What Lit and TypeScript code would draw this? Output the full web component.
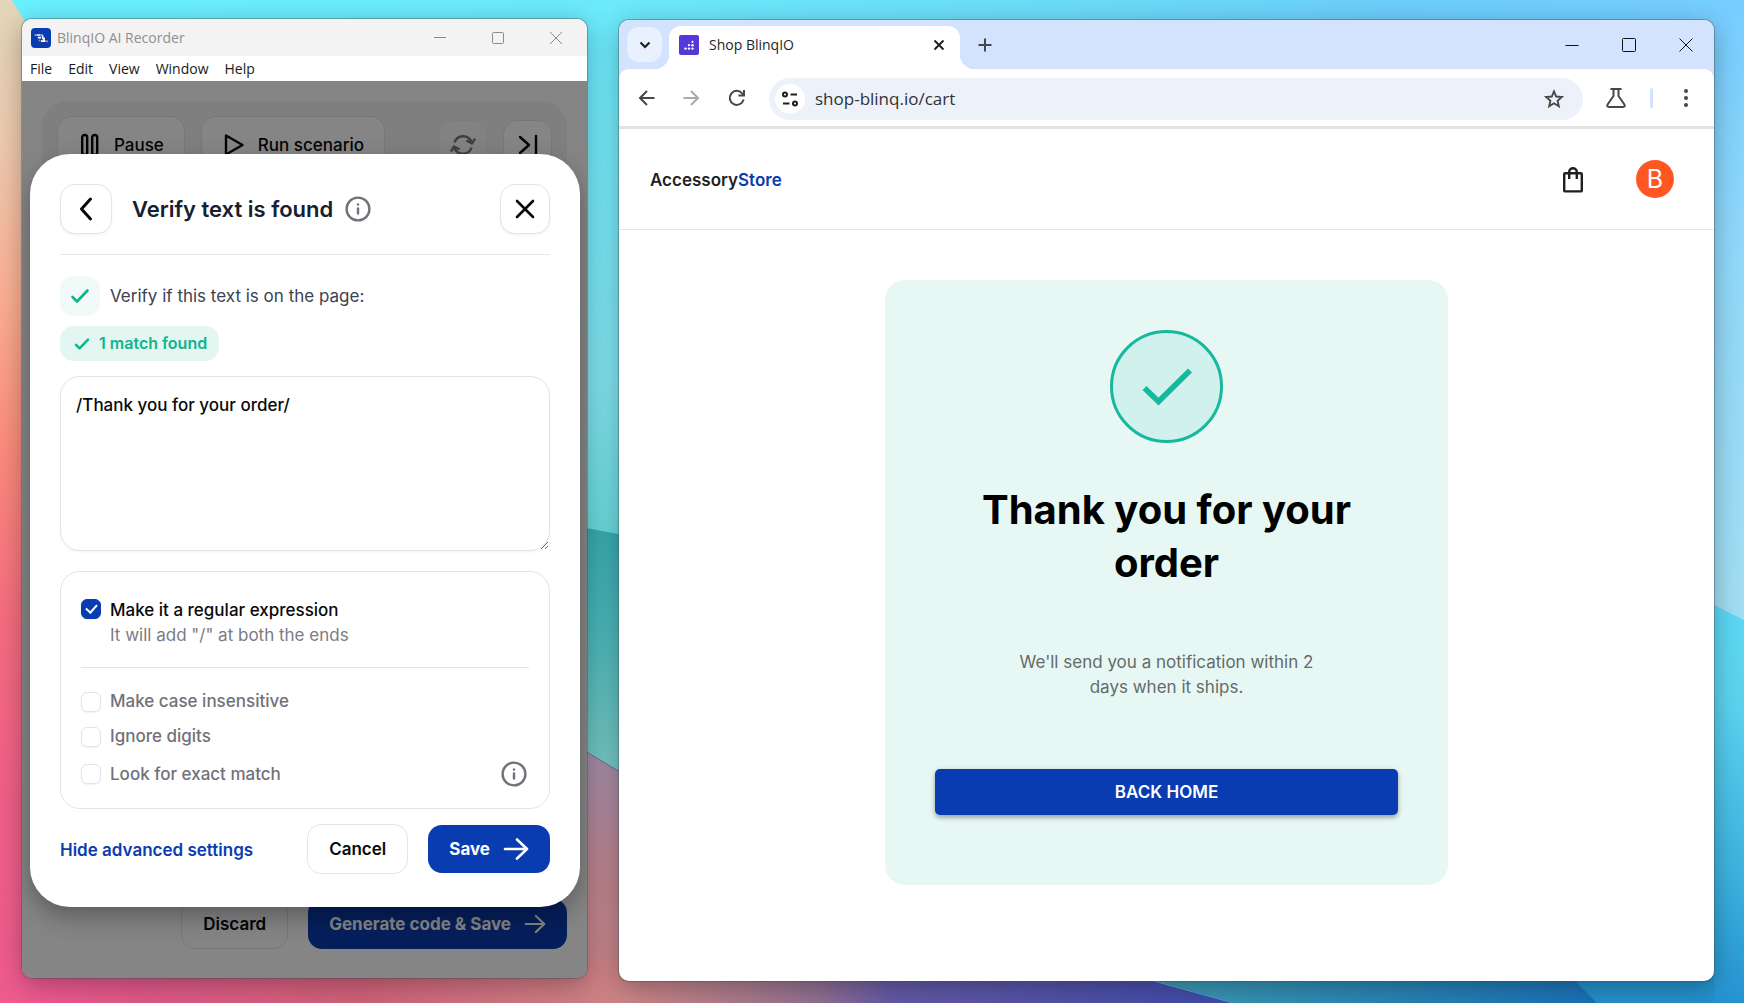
import { LitElement, html, css, svg } from "lit";
import { customElement, state } from "lit/decorators.js";

const chevronLeft = html`<svg width="28" height="28" viewBox="0 0 28 28" fill="none" stroke="currentColor" stroke-width="3" stroke-linecap="round" stroke-linejoin="round"><path d="M18.5 4 L9.5 14 L18.5 24"/></svg>`;
const closeIcon = html`<svg width="24" height="24" viewBox="0 0 24 24" fill="none" stroke="currentColor" stroke-width="2.6" stroke-linecap="round"><path d="M4 4 L20 20 M20 4 L4 20"/></svg>`;
const infoIcon = html`<svg width="26" height="26" viewBox="0 0 26 26" fill="none" stroke="#71717a" stroke-width="2.4" stroke-linecap="round"><circle cx="13" cy="13" r="11.4"/><path d="M13 12.4 V17.6"/><path d="M13 8.4 V8.5"/></svg>`;
const arrowRight = (size: number) => html`<svg width=${size} height=${size} viewBox="0 0 26 26" fill="none" stroke="currentColor" stroke-width="2.6" stroke-linecap="round" stroke-linejoin="round"><path d="M2 13 H24 M14 3.5 L24 13 L14 22.5"/></svg>`;
const check = (size: number, weight: number) => html`<svg width=${size} height=${size} viewBox="0 0 20 20" fill="none" stroke="currentColor" stroke-width=${weight} stroke-linecap="round" stroke-linejoin="round"><path d="M2.5 11 L7 15.5 L17.5 4.5"/></svg>`;

@customElement("desktop-wallpaper")
export class DesktopWallpaper extends LitElement {
  static styles = css`
    :host { display: block; }
    svg { display: block; width: 100%; height: 100%; }
  `;
  private ramp(stops: [number, string][]) {
    return stops.map(([offset, color]) => svg`<stop offset=${offset} stop-color=${color}/>`);
  }
  render() {
    return html`<svg viewBox="0 0 1744 1003" preserveAspectRatio="none" aria-hidden="true">
      <defs>
        <linearGradient id="top" x1="0" x2="1" y1="0" y2="0">${this.ramp([[0, "#69f0ff"], [0.35, "#6ce9fb"], [0.6, "#6bdcf8"], [0.8, "#6ccefa"], [1, "#76cdff"]])}</linearGradient>
        <linearGradient id="mid" x1="0" x2="0" y1="0" y2="1">${this.ramp([[0, "#6beafc"], [0.7, "#80e2ee"], [1, "#68d8d9"]])}</linearGradient>
        <linearGradient id="teal" x1="0" x2="0" y1="0" y2="1">${this.ramp([[0, "#36a9ae"], [0.4, "#4bb5b8"], [1, "#7dcac4"]])}</linearGradient>
        <linearGradient id="mauve" x1="0" x2="0" y1="0" y2="1">${this.ramp([[0, "#9c8cac"], [0.5, "#bb838e"], [1, "#c98486"]])}</linearGradient>
        <linearGradient id="warm" x1="0" x2="0" y1="0" y2="1">${this.ramp([[0, "#e2d6b8"], [0.15, "#eec9ae"], [0.3, "#fcae92"], [0.45, "#fb8b7c"], [0.62, "#f66c80"], [0.8, "#f05f88"], [1, "#ef5b8f"]])}</linearGradient>
        <linearGradient id="low" x1="0" x2="1" y1="0" y2="0">${this.ramp([[0, "#ef598e"], [0.1, "#df5888"], [0.28, "#cf6179"], [0.5, "#cc8486"], [0.6, "#a97a8c"], [0.66, "#8f6f92"], [0.72, "#6459a6"], [1, "#3f4bab"]])}</linearGradient>
        <linearGradient id="sea" x1="0" x2="1" y1="0" y2="0">${this.ramp([[0, "#429cb4"], [0.5, "#2a87b5"], [1, "#1a6fb8"]])}</linearGradient>
        <linearGradient id="sky" x1="0" x2="0" y1="0" y2="1">${this.ramp([[0, "#76cdff"], [0.4, "#90d8fa"], [1, "#a2def2"]])}</linearGradient>
        <linearGradient id="azure" x1="0" x2="0" y1="0" y2="1">${this.ramp([[0, "#5dd8f4"], [0.25, "#5cd4f0"], [0.7, "#3cb1de"], [1, "#2593d2"]])}</linearGradient>
      </defs>
      <rect width="1744" height="1003" fill="url(#top)"/>
      <rect x="560" y="20" width="90" height="520" fill="url(#mid)"/>
      <path d="M0 0 H12 L40 46 V1003 H0 Z" fill="url(#warm)"/>
      <path d="M560 523 L650 540 V795 H560 Z" fill="url(#teal)"/>
      <path d="M560 736 L650 790 V1003 H560 Z" fill="url(#mauve)"/>
      <path d="M560 736 L650 790" stroke="#7a62a0" stroke-width="1"/>
      <path d="M20 960 H1077 L1232 1003 H20 Z" fill="url(#low)"/>
      <path d="M1122 972 L1232 1003 H1620 V960 H1122 Z" fill="url(#sea)"/>
      <path d="M1690 0 H1744 V622 H1690 Z" fill="url(#sky)"/>
      <path d="M1690 593 L1744 620 V1003 H1690 Z" fill="url(#azure)"/>
      <path d="M1562 972 L1575 981 L1597 1003 H1714 V972 Z" fill="#2590cb"/>
    </svg>`;
  }
}

@customElement("recorder-window")
export class RecorderWindow extends LitElement {
  @state() private text = "/Thank you for your order/";
  @state() private options = [
    { id: "case", label: "Make case insensitive" },
    { id: "digits", label: "Ignore digits" },
    { id: "exact", label: "Look for exact match", info: true },
  ];

  static styles = css`
    :host {
      display: flex; flex-direction: column; overflow: hidden; border-radius: 10px;
      background: #fff; color: #09090b;
      font: 500 17px/25px Inter, "Liberation Sans", sans-serif;
    }
    * { box-sizing: border-box; }
    button, textarea { font: inherit; color: inherit; margin: 0; }
    button { display: inline-flex; align-items: center; justify-content: center; padding: 0; cursor: pointer; }
    svg { display: block; flex: none; }
    .titlebar { display: flex; align-items: center; height: 37px; padding: 0 21px 0 9px; gap: 6px; background: #f3f3f3; color: #8f8f8f; font: 400 14px/20px "Open Sans", "Noto Sans", sans-serif; }
    .title { flex: 1; }
    .controls { display: flex; gap: 38px; }
    .controls button { width: 20px; height: 20px; border: 0; background: none; }
    .menu { display: flex; align-items: center; gap: 16px; height: 25px; padding: 0 8px; color: #1a1a1a; font: 400 14px/20px "Open Sans", "Noto Sans", sans-serif; }
    .menu button { border: 0; background: none; }
    .body { flex: 1; display: grid; }
    .app, .overlay { grid-area: 1 / 1; min-width: 0; }
    .app { display: flex; flex-direction: column; justify-content: space-between; padding: 20px 20px 29px; }
    .panel { display: flex; align-items: flex-start; gap: 16px; height: 160px; padding: 15px; background: #f4f4f4; border-radius: 26px; }
    .panel button { height: 58px; border: 1px solid #e4e4e7; border-radius: 14px; background: #fff; }
    .panel .wide { padding: 0 20px; gap: 14px; }
    .panel .small { width: 49px; height: 50px; margin-top: 4px; }
    .panel .first { margin-left: auto; }
    .panel .faded { background: #fafafa; border-color: #efefef; color: #777; }
    .actions { display: flex; justify-content: flex-end; gap: 20px; }
    .outline, .primary { height: 50px; padding: 0 21px; border-radius: 14px; }
    .outline { border: 1px solid #e4e4e7; background: #fff; font-weight: 600; }
    .primary { border: 0; background: #0a3cb1; color: #fff; font-weight: 700; gap: 13px; }
    .overlay { position: relative; padding: 73px 7px 71px 8px; background: rgba(0, 0, 0, 0.48); }
    .modal { padding: 30px 30px 33px; background: #fff; border-radius: 40px; box-shadow: 0 10px 24px rgba(0, 0, 0, 0.3); }
    .head { display: flex; align-items: center; padding-bottom: 20px; border-bottom: 1px solid #e2e8f0; }
    .head .square { width: 50px; height: 50px; border: 1px solid #e4e4e7; border-radius: 15px; background: #fff; box-shadow: 0 1px 3px rgba(0, 0, 0, 0.06); }
    .head .back { width: 52px; }
    h2 { margin: 0 12px 0 20px; color: #18202f; font: 600 22px/30px Inter, "Liberation Sans", sans-serif; }
    .close { margin-left: auto; }
    .prompt { display: flex; align-items: center; gap: 10px; margin-top: 21px; color: #3b4150; font-weight: 400; }
    .tick { display: grid; place-items: center; width: 40px; height: 40px; border-radius: 13px; background: #f1faf9; color: #10b48c; }
    .pill { display: flex; align-items: center; gap: 9px; width: fit-content; height: 35px; margin-top: 10px; padding: 0 12px 0 14px; border-radius: 14px; background: #e3f6f1; color: #10b48c; font-weight: 600; font-size: 16px; }
    textarea { display: block; width: 100%; height: 175px; margin-top: 15px; padding: 16px 15px; resize: vertical; outline: 0; border: 1px solid #e4e4e7; border-radius: 20px; background: #fff; box-shadow: 0 1px 3px rgba(0, 0, 0, 0.05); }
    .options { margin-top: 20px; padding: 26px 20px 14px; border: 1px solid #e4e4e7; border-radius: 20px; }
    .regex { display: grid; grid-template-columns: 20px 1fr; column-gap: 9px; padding-bottom: 19px; margin-bottom: 16px; border-bottom: 1px solid #e4e4e7; }
    .hint { grid-column: 2; color: #7b7b83; font-weight: 400; }
    .row { display: flex; align-items: center; gap: 9px; height: 35px; color: #71717a; }
    .row label { flex: 1; }
    .row.tall { height: 40px; padding-right: 2px; }
    input { position: relative; appearance: none; width: 20px; height: 20px; margin: 0; border: 1px solid #e4e4e7; border-radius: 6px; background: #fff; box-shadow: 0 1px 2px rgba(0, 0, 0, 0.06); }
    input:checked { border-color: #0a3cb1; background: #0a3cb1; }
    input:checked::after { content: ""; position: absolute; left: 6px; top: 2px; width: 5px; height: 9px; border: solid #fff; border-width: 0 2px 2px 0; transform: rotate(42deg); }
    .regex input { margin-top: 1px; }
    .footer { display: flex; align-items: center; gap: 20px; margin-top: 15px; }
    .footer a { flex: 1; padding-top: 2px; color: #0a3cb1; font-weight: 600; text-decoration: none; white-space: nowrap; }
    .footer .primary { height: 48px; }
    .info { border: 0; background: none; }
  `;

  render() {
    return html`
      <div class="titlebar">
        <svg width="20" height="20" viewBox="0 0 20 20"><rect width="20" height="20" rx="4" fill="#0a3cb1"/><g fill="none" stroke="#fff" stroke-width="1.7"><path d="M5.5 7 H9.5 M6.8 9.6 H10 M11.6 7.2 V9.6 M11 10.4 H13 V12.8 M10 13.2 H14.5"/><path d="M9.5 7 H12" stroke="#8fb0f5"/></g><circle cx="4.4" cy="7" r="1" fill="#f08a54"/><circle cx="16" cy="13.2" r="1" fill="#f08a54"/><circle cx="8.6" cy="12.4" r="0.9" fill="#f08a54"/></svg>
        <span class="title">BlinqIO AI Recorder</span>
        <div class="controls">
          <button aria-label="Minimize"><svg width="14" height="14" viewBox="0 0 14 14" stroke="#8c8c8c"><path d="M1 6.5 H13"/></svg></button>
          <button aria-label="Maximize"><svg width="14" height="14" viewBox="0 0 14 14" fill="none" stroke="#8c8c8c"><rect x="1.5" y="1.5" width="11" height="11" rx="1"/></svg></button>
          <button aria-label="Close"><svg width="14" height="14" viewBox="0 0 14 14" stroke="#8c8c8c"><path d="M1 1 L13 13 M13 1 L1 13"/></svg></button>
        </div>
      </div>
      <nav class="menu">${["File", "Edit", "View", "Window", "Help"].map((m) => html`<button>${m}</button>`)}</nav>
      <div class="body">
        <div class="app">
          <div class="panel">
            <button class="wide"><svg width="22" height="24" viewBox="0 0 22 24" fill="none" stroke="currentColor" stroke-width="2.4"><rect x="4.2" y="2" width="5" height="20" rx="2.4"/><rect x="14.2" y="2" width="5" height="20" rx="2.4"/></svg>Pause</button>
            <button class="wide"><svg width="22" height="24" viewBox="0 0 22 24" fill="none" stroke="currentColor" stroke-width="2.4" stroke-linejoin="round"><path d="M4 2.5 L20.5 12 L4 21.5 Z"/></svg>Run scenario</button>
            <button class="small first faded" aria-label="Refresh"><svg width="26" height="26" viewBox="0 0 26 26" fill="none" stroke="currentColor" stroke-width="2.4"><path d="M4.5 10.5 A9 9 0 0 1 21.5 10 M21.5 15.5 A9 9 0 0 1 4.5 16"/><path d="M16.5 8.5 L22 11.5 L25 6.5 M1 19.5 L4 14.5 L9.5 17.5" stroke-linejoin="round"/></svg></button>
            <button class="small" aria-label="Skip to end"><svg width="22" height="22" viewBox="0 0 22 22" fill="none" stroke="currentColor" stroke-width="2.4" stroke-linecap="round" stroke-linejoin="round"><path d="M3 3 L12 11 L3 19 M19 2 V20"/></svg></button>
          </div>
          <div class="actions">
            <button class="outline">Discard</button>
            <button class="primary">Generate code &amp; Save ${arrowRight(22)}</button>
          </div>
        </div>
        <div class="overlay">
          <section class="modal" role="dialog" aria-labelledby="dialog-title">
            <div class="head">
              <button class="square back" aria-label="Back">${chevronLeft}</button>
              <h2 id="dialog-title">Verify text is found</h2>
              ${infoIcon}
              <button class="square close" aria-label="Close">${closeIcon}</button>
            </div>
            <label class="prompt" for="expected"><span class="tick">${check(20, 2.6)}</span>Verify if this text is on the page:</label>
            <div class="pill">${check(16, 3)}1 match found</div>
            <textarea id="expected" spellcheck="false" .value=${this.text} @input=${(e: Event) => (this.text = (e.target as HTMLTextAreaElement).value)}></textarea>
            <div class="options">
              <div class="regex">
                <input type="checkbox" id="regex" checked />
                <label for="regex">Make it a regular expression</label>
                <span class="hint">It will add "/" at both the ends</span>
              </div>
              ${this.options.map((o) => html`<div class="row ${o.info ? "tall" : ""}">
                <input type="checkbox" id=${o.id} /><label for=${o.id}>${o.label}</label>
                ${o.info ? html`<button class="info" aria-label="About exact match">${infoIcon}</button>` : ""}
              </div>`)}
            </div>
            <div class="footer">
              <a href="#">Hide advanced settings</a>
              <button class="outline">Cancel</button>
              <button class="primary">Save ${arrowRight(26)}</button>
            </div>
          </section>
        </div>
      </div>`;
  }
}

@customElement("browser-window")
export class BrowserWindow extends LitElement {
  static styles = css`
    :host {
      display: flex; flex-direction: column; overflow: hidden; border-radius: 10px;
      background: #fff; color: #1f1f1f;
      font: 400 17px/25px Inter, "Liberation Sans", sans-serif;
    }
    * { box-sizing: border-box; }
    button { display: inline-flex; align-items: center; justify-content: center; margin: 0; padding: 0; border: 0; background: none; color: inherit; font: inherit; cursor: pointer; }
    svg { display: block; flex: none; }
    .strip { display: flex; height: 49px; padding: 6px 18px 0 8px; background: #d3e3fd; }
    .list { width: 35px; height: 35px; margin-top: 1px; border-radius: 12px; background: #e9f0fe; }
    .tab { position: relative; display: flex; align-items: center; width: 291px; margin-left: 7px; padding: 0 15px 0 10px; gap: 10px; border-radius: 12px 12px 0 0; background: #fff; font: 400 14px/20px "Open Sans", "Noto Sans", sans-serif; }
    .tab::before, .tab::after { content: ""; position: absolute; bottom: 0; width: 14px; height: 14px; }
    .tab::before { left: -14px; background: radial-gradient(circle at 0 0, transparent 14px, #fff 14px); }
    .tab::after { right: -14px; background: radial-gradient(circle at 100% 0, transparent 14px, #fff 14px); }
    .tab, .plus { height: 43px; padding-bottom: 6px; }
    .name { flex: 1; }
    .plus { width: 20px; margin-left: 15px; }
    .controls { display: flex; gap: 37px; margin-left: auto; height: 37px; }
    .controls button { width: 20px; }
    .toolbar { background: #d3e3fd; }
    .bar { display: flex; align-items: center; height: 57px; padding: 0 16px; border-radius: 10px 10px 0 0; background: #fff; color: #474747; }
    .nav { display: flex; gap: 21px; }
    .nav button, .tool { width: 24px; height: 24px; }
    .address { flex: 1; display: flex; align-items: center; min-width: 0; height: 42px; margin: 2px 21px 0 20px; padding: 0 18px 0 6px; gap: 10px; border-radius: 21px; background: #ecf1fa; }
    .site { width: 30px; height: 30px; border-radius: 50%; background: #fff; color: #1f1f1f; }
    .address input { flex: 1; min-width: 0; padding: 0; border: 0; outline: 0; background: none; color: #303235; font: 400 17px/24px "Open Sans", "Noto Sans", sans-serif; }
    .rule { width: 3px; height: 20px; margin: 0 21px 0 22px; border-radius: 2px; background: #d3e3fd; }
    .edge { height: 3px; background: #e2e2e2; }
    header { display: flex; align-items: center; height: 101px; padding: 0 40px 0 31px; border-bottom: 1px solid #e5e5e5; }
    .brand { flex: 1; padding-top: 2px; color: #1f1f1f; font-weight: 600; text-decoration: none; }
    .brand span { color: #0a3cb1; }
    .cart { width: 28px; height: 28px; }
    .avatar { width: 38px; height: 38px; margin-left: 49px; border-radius: 50%; background: #ff5722; color: #fff; font: 400 25px/38px Inter, "Liberation Sans", sans-serif; }
    main { flex: 1; display: flex; justify-content: center; align-items: flex-start; padding: 50px 20px; }
    .card { display: flex; flex-direction: column; align-items: center; width: 100%; max-width: 563px; padding: 50px 50px 70px; border-radius: 20px; background: #e7f8f4; text-align: center; }
    .badge { display: grid; place-items: center; width: 113px; height: 113px; border: 3px solid #17b8a0; border-radius: 50%; background: #d1f1ec; }
    h1 { max-width: 400px; margin: 40px 0 0; color: #000; font: 700 40px/53px Inter, "Liberation Sans", sans-serif; }
    p { max-width: 330px; margin: 61px 0 0; color: #636b69; font-size: 17px; }
    .home { width: 100%; height: 46px; margin-top: 69px; border-radius: 5px; background: #0a3cb1; color: #fff; font-weight: 600; box-shadow: 0 3px 4px rgba(0, 0, 0, 0.25), 0 1px 6px rgba(0, 0, 0, 0.12); }
  `;

  render() {
    return html`
      <div class="strip">
        <button class="list" aria-label="Search tabs"><svg width="12" height="12" viewBox="0 0 12 12" fill="none" stroke="#1f1f1f" stroke-width="2.2"><path d="M1.5 3.5 L6 8 L10.5 3.5"/></svg></button>
        <div class="tab">
          <svg width="20" height="20" viewBox="0 0 20 20"><rect width="20" height="20" rx="2" fill="#5638d8"/><g fill="#fff"><circle cx="6.5" cy="13.6" r="1.2"/><circle cx="10" cy="13.6" r="1.2"/><circle cx="13.5" cy="13.6" r="1.2"/><circle cx="10" cy="10.2" r="1.1"/><circle cx="13.5" cy="10.2" r="1.2"/><circle cx="13.5" cy="6.8" r="1.1"/></g></svg>
          <span class="name">Shop BlinqIO</span>
          <button aria-label="Close tab"><svg width="12" height="12" viewBox="0 0 12 12" stroke="#1f1f1f" stroke-width="1.9"><path d="M1.5 1.5 L10.5 10.5 M10.5 1.5 L1.5 10.5"/></svg></button>
        </div>
        <button class="plus" aria-label="New tab"><svg width="14" height="14" viewBox="0 0 14 14" stroke="#474747" stroke-width="2"><path d="M7 0.5 V13.5 M0.5 7 H13.5"/></svg></button>
        <div class="controls">
          <button aria-label="Minimize"><svg width="14" height="14" viewBox="0 0 14 14" stroke="#111"><path d="M0.5 7.5 H13.5"/></svg></button>
          <button aria-label="Maximize"><svg width="14" height="14" viewBox="0 0 14 14" fill="none" stroke="#111"><rect x="0.5" y="0.5" width="13" height="13" rx="1"/></svg></button>
          <button aria-label="Close"><svg width="14" height="14" viewBox="0 0 14 14" stroke="#111"><path d="M0.5 0.5 L13.5 13.5 M13.5 0.5 L0.5 13.5"/></svg></button>
        </div>
      </div>
      <div class="toolbar"><div class="bar">
        <div class="nav">
          <button aria-label="Back"><svg width="18" height="18" viewBox="0 0 18 18" fill="none" stroke="#474747" stroke-width="2"><path d="M16.5 9 H2.5 M9 2 L2 9 L9 16"/></svg></button>
          <button aria-label="Forward"><svg width="18" height="18" viewBox="0 0 18 18" fill="none" stroke="#a9a9a9" stroke-width="2"><path d="M0.5 9 H14.5 M8 2 L15 9 L8 16"/></svg></button>
          <button aria-label="Reload"><svg width="18" height="18" viewBox="0 0 18 18" fill="none" stroke="#474747" stroke-width="2"><path d="M15.6 10.5 A7 7 0 1 1 14.2 4.4 L15.8 6.2"/><path d="M16 1 V6.6 H10.4"/></svg></button>
        </div>
        <div class="address">
          <button class="site" aria-label="Site information"><svg width="18" height="18" viewBox="0 0 18 18" fill="none" stroke="currentColor" stroke-width="2"><circle cx="4" cy="4.5" r="2"/><path d="M9.5 4.5 H16 M2 13.5 H8.5"/><circle cx="14" cy="13.5" r="2"/></svg></button>
          <input aria-label="Address" value="shop-blinq.io/cart" spellcheck="false" />
          <button aria-label="Bookmark"><svg width="22" height="22" viewBox="0 0 24 24" fill="none" stroke="#474747" stroke-width="2" stroke-linejoin="miter"><path d="M12 3.6 L14.4 9.3 L20.6 9.8 L15.9 13.9 L17.3 19.9 L12 16.7 L6.7 19.9 L8.1 13.9 L3.4 9.8 L9.6 9.3 Z"/></svg></button>
        </div>
        <button class="tool" aria-label="Experiments"><svg width="22" height="22" viewBox="0 0 22 22" fill="none" stroke="#474747" stroke-width="2" stroke-linejoin="round"><path d="M5.5 2 H16.5 M8.5 2 V9 L2.6 17.5 Q1.4 20 4 20 H18 Q20.6 20 19.4 17.5 L13.5 9 V2"/></svg></button>
        <span class="rule"></span>
        <button class="tool" aria-label="Menu"><svg width="20" height="20" viewBox="0 0 20 20" fill="#474747"><circle cx="10" cy="3" r="2"/><circle cx="10" cy="10" r="2"/><circle cx="10" cy="17" r="2"/></svg></button>
      </div></div>
      <div class="edge"></div>
      <header>
        <a class="brand" href="#">Accessory<span>Store</span></a>
        <button class="cart" aria-label="Cart"><svg width="28" height="28" viewBox="0 0 28 28" fill="none" stroke="#1f1f1f" stroke-width="2.4" stroke-linejoin="round"><rect x="5.2" y="8.2" width="17.6" height="18.2" rx="1"/><path d="M10.2 14 V7 A3.8 3.8 0 0 1 17.8 7 V14"/></svg></button>
        <button class="avatar" aria-label="Account">B</button>
      </header>
      <main>
        <section class="card">
          <div class="badge"><svg width="52" height="40" viewBox="0 0 52 40" fill="none" stroke="#17b8a0" stroke-width="5.6"><path d="M3.5 21 L17.5 34.5 L49 3.5"/></svg></div>
          <h1>Thank you for your order</h1>
          <p>We'll send you a notification within 2 days when it ships.</p>
          <button class="home">BACK HOME</button>
        </section>
      </main>`;
  }
}

@customElement("app-root")
export class AppRoot extends LitElement {
  static styles = css`
    :host { display: block; position: relative; min-height: 100vh; }
    desktop-wallpaper { position: absolute; inset: 0; }
    .desk {
      position: relative; box-sizing: border-box; display: grid; min-height: 100vh;
      grid-template-columns: minmax(0, 565fr) minmax(0, 1095fr); gap: 32px;
      padding: 19px 30px 22px 22px;
    }
    recorder-window, browser-window { box-shadow: 0 0 0 1px rgba(60, 80, 90, 0.4), 0 6px 26px rgba(0, 0, 0, 0.3); }
    recorder-window { margin-bottom: 3px; }
    browser-window { margin-top: 1px; }
  `;
  render() {
    return html`
      <desktop-wallpaper></desktop-wallpaper>
      <div class="desk">
        <recorder-window></recorder-window>
        <browser-window></browser-window>
      </div>`;
  }
}
